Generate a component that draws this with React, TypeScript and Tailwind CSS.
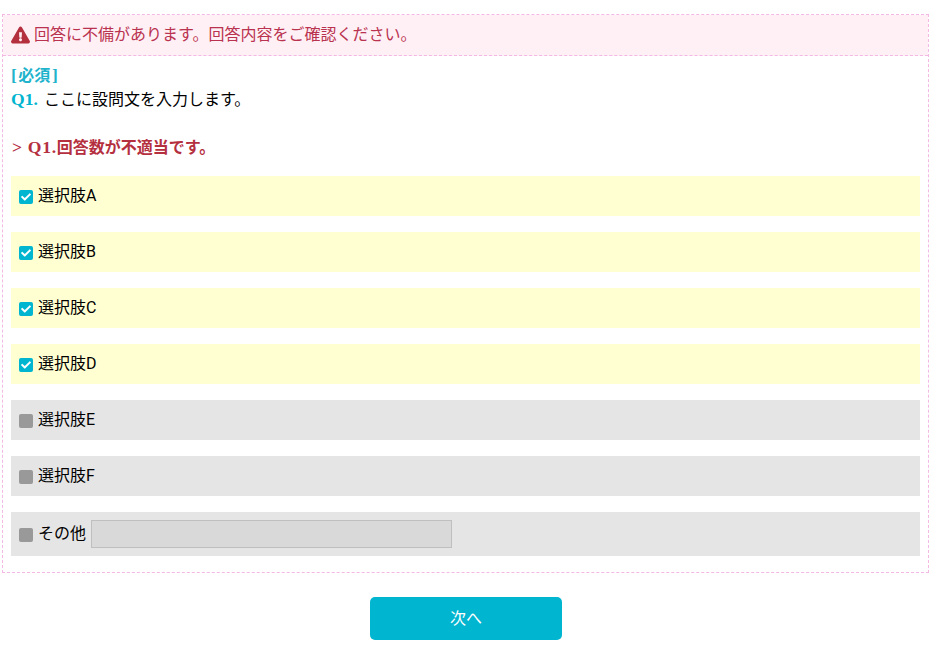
import { FaCheck, FaExclamationTriangle } from "react-icons/fa"

const choices = ["選択肢A", "選択肢B", "選択肢C", "選択肢D", "選択肢E", "選択肢F"]
const checkedCount = 4

// Small square checkbox, teal with a tick when selected
function CheckBox({ checked }: { checked: boolean }) {
  return (
    <span
      className={`mt-[2px] flex h-[14px] w-[14px] shrink-0 items-center justify-center rounded-[2px] ${
        checked ? "bg-[#00b5cf]" : "bg-[#999999]"
      }`}
    >
      {checked && <FaCheck className="h-[10px] w-[10px] text-white" />}
    </span>
  )
}

export default function App() {
  return (
    <div className="min-h-[666px] bg-white pt-[14px] pl-[2px] pr-[6px] text-[16px] leading-[24px] text-black font-['Roboto','Noto_Sans_CJK_JP',sans-serif]">
      {/* Question box */}
      <div className="h-[559px] w-[927px] border border-dashed border-[#f4b8e4]">
        {/* Error banner */}
        <div className="flex h-[41px] items-center gap-[4px] border-b border-dashed border-[#f4b8e4] bg-[#fff0f5] pl-[8px] text-[#b9324f]">
          <FaExclamationTriangle className="h-[18px] w-[19px] text-[#b5303f]" />
          <span>回答に不備があります。回答内容をご確認ください。</span>
        </div>

        <div className="px-[8px] pt-[8px]">
          {/* Question */}
          <div className="h-[24px] font-bold text-[#1fb3cc]">
            <span className="mr-[1.5px] font-['Liberation_Serif',serif] text-[17.6px] leading-none">[</span>
            必須
            <span className="ml-[1.5px] font-['Liberation_Serif',serif] text-[17.6px] leading-none">]</span>
          </div>
          <div className="h-[24px]">
            <span className="font-['Liberation_Serif',serif] text-[17.6px] leading-none font-bold text-[#00b5cf]">Q1.</span>
            <span className="ml-[6px]">ここに設問文を入力します。</span>
          </div>
          <div className="mt-[24px] h-[24px] pl-[1px] font-bold text-[#b5303f]">
            <span className="font-['Liberation_Serif',serif] text-[17.6px] leading-none tracking-[0.7px]">&gt; Q1.</span>
            回答数が不適当です。
          </div>

          {/* Choices */}
          <div className="mt-[16px] flex flex-col gap-[16px]">
            {choices.map((choice, i) => (
              <div
                key={choice}
                className={`flex h-[40px] w-[909px] items-center gap-[5px] pl-[8px] ${
                  i < checkedCount ? "bg-[#ffffd2]" : "bg-[#e5e5e5]"
                }`}
              >
                <CheckBox checked={i < checkedCount} />
                <span>{choice}</span>
              </div>
            ))}
            <div className="flex h-[44px] w-[909px] items-center gap-[5px] bg-[#e5e5e5] pl-[8px]">
              <CheckBox checked={false} />
              <span>その他</span>
              <input
                type="text"
                disabled
                className="h-[28px] w-[361px] border border-[#bfbfbf] bg-[#d9d9d9]"
              />
            </div>
          </div>
        </div>
      </div>

      {/* Next button */}
      <div className="mt-[24px] w-[928px] pl-[368px]">
        <button className="h-[43px] w-[192px] rounded-[5px] bg-[#00b5cf] text-white">次へ</button>
      </div>
    </div>
  )
}
